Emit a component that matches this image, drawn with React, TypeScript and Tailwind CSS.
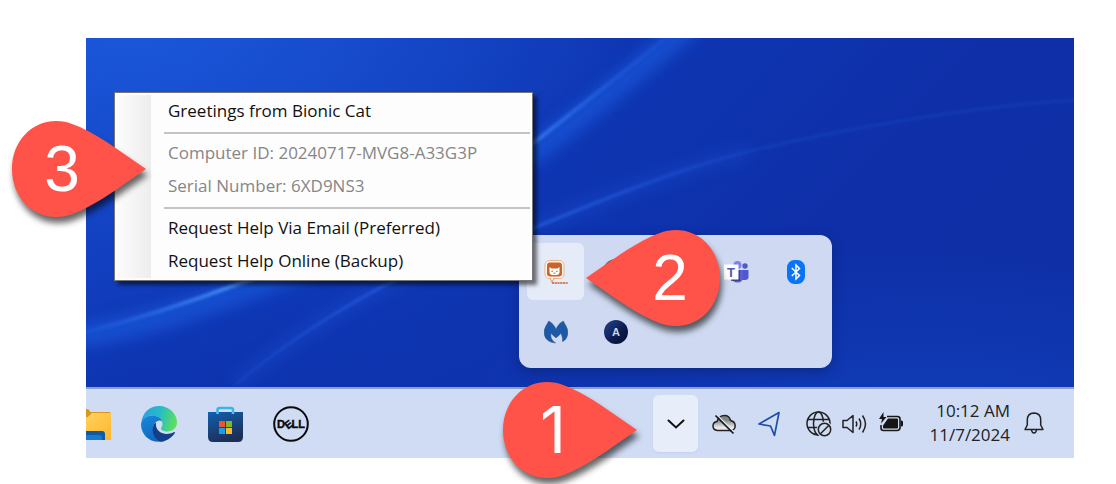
import React from "react";

const Wallpaper: React.FC = () => (
  <svg
    className="absolute inset-0 h-full w-full"
    viewBox="0 0 988 420"
    preserveAspectRatio="none"
    aria-hidden="true"
  >
    <defs>
      <linearGradient id="base" x1="0" y1="0" x2="1" y2="0.4">
        <stop offset="0" stopColor="#1546c8" />
        <stop offset="0.4" stopColor="#0f38b6" />
        <stop offset="0.8" stopColor="#0e2fa8" />
        <stop offset="1" stopColor="#0e2fa6" />
      </linearGradient>
      <radialGradient id="topLeft" cx="0.05" cy="0" r="0.5">
        <stop offset="0" stopColor="#1b58da" stopOpacity="0.9" />
        <stop offset="1" stopColor="#1b58da" stopOpacity="0" />
      </radialGradient>
      <radialGradient id="bottomLeft" cx="0.1" cy="0.95" r="0.4">
        <stop offset="0" stopColor="#0d31ac" />
        <stop offset="1" stopColor="#0d31ac" stopOpacity="0" />
      </radialGradient>
      <radialGradient id="bottomRight" cx="0.85" cy="1" r="0.5">
        <stop offset="0" stopColor="#1142bf" stopOpacity="0.9" />
        <stop offset="1" stopColor="#1142bf" stopOpacity="0" />
      </radialGradient>
      <linearGradient id="beam" gradientUnits="userSpaceOnUse" x1="0" y1="0" x2="600" y2="0">
        <stop offset="0" stopColor="#2f74f2" stopOpacity="0.15" />
        <stop offset="0.25" stopColor="#4c98ff" stopOpacity="0.9" />
        <stop offset="0.75" stopColor="#3c82fa" stopOpacity="0.75" />
        <stop offset="0.9" stopColor="#2c6cf0" stopOpacity="0.3" />
        <stop offset="1" stopColor="#2c6cf0" stopOpacity="0.1" />
      </linearGradient>
      <linearGradient id="thinBeam" gradientUnits="userSpaceOnUse" x1="140" y1="0" x2="988" y2="0">
        <stop offset="0" stopColor="#2b6cf0" stopOpacity="0.1" />
        <stop offset="0.2" stopColor="#2b6cf0" stopOpacity="0.6" />
        <stop offset="0.4" stopColor="#2b6cf0" stopOpacity="0.6" />
        <stop offset="0.6" stopColor="#2b6cf0" stopOpacity="0.2" />
        <stop offset="1" stopColor="#2b6cf0" stopOpacity="0.15" />
      </linearGradient>
      <filter id="soft" x="-20%" y="-20%" width="140%" height="140%">
        <feGaussianBlur stdDeviation="8" />
      </filter>
      <filter id="fine" x="-20%" y="-20%" width="140%" height="140%">
        <feGaussianBlur stdDeviation="1.600" />
      </filter>
    </defs>
    <rect width="988" height="420" fill="url(#base)" />
    <rect width="988" height="420" fill="url(#topLeft)" />
    <rect width="988" height="420" fill="url(#bottomLeft)" />
    <rect width="988" height="420" fill="url(#bottomRight)" />
    <g fill="none">
      <path
        d="M610 -18C562 24 516 62 456 109C356 171 256 218 163 250C106 272 56 288 -10 299"
        stroke="#1f62e6"
        strokeWidth="20"
        opacity="0.6"
        filter="url(#soft)"
      />
      <path
        d="M604 -20C556 20 510 56 450 103C350 165 250 212 157 244C100 266 50 282 -10 296"
        stroke="url(#beam)"
        strokeWidth="4"
        filter="url(#fine)"
      />
      <path
        d="M664 113C590 132 520 160 448 190C400 208 345 225 299 247C260 268 200 304 149 347"
        stroke="#1c56d8"
        strokeWidth="14"
        opacity="0.3"
        filter="url(#soft)"
      />
      <path
        d="M998 62C900 66 760 90 664 113C590 132 520 160 448 190C400 208 345 225 299 247C260 268 200 304 149 347"
        stroke="url(#thinBeam)"
        strokeWidth="3"
        filter="url(#fine)"
      />
    </g>
  </svg>
);

type CalloutProps = {
  label: string;
  flip?: boolean;
  className: string;
};

const Callout: React.FC<CalloutProps> = ({ label, flip, className }) => (
  <div
    className={`absolute z-30 flex h-[96px] w-[134px] items-center text-[64px] text-white drop-shadow-[2px_6px_3px_rgba(0,0,0,0.6)] ${
      flip ? "justify-end" : "justify-start"
    } ${className}`}
  >
    <svg
      className="absolute inset-0 h-full w-full"
      viewBox="0 0 134 96"
      aria-hidden="true"
    >
      <path
        transform={flip ? "translate(134 0) scale(-1 1)" : undefined}
        fill="#ff534a"
        d="M0 48C0 21 19 0 44 0C56 0 66 5 76 10C95 20 115 35 134 48C115 61 95 76 76 86C66 91 56 96 44 96C19 96 0 75 0 48Z"
      />
    </svg>
    <span className="relative w-[100px] text-center leading-none">{label}</span>
  </div>
);

const CatIcon = () => (
  <svg width="26" height="26" viewBox="0 0 26 26">
    <rect x="2" y="1.500" width="19" height="18" rx="4.500" fill="#fff4ea" stroke="#e9b48d" />
    <path d="M7 19L9 23.500L11 19" fill="#fff4ea" stroke="#dc9a6c" />
    <rect x="4" y="3.500" width="15" height="14" rx="3" fill="#c9652b" />
    <path
      d="M6.500 8L8.500 9.500H14.500L16.500 8V13Q16.500 16 13.500 16H9.500Q6.500 16 6.500 13Z"
      fill="#fff"
    />
    <path d="M8.300 12.300H10M13 12.300H14.700M10.500 14.200H12.500" stroke="#c9652b" />
    <path d="M9 24H25" stroke="#c9652b" strokeWidth="1.600" strokeDasharray="2.200 0.500" />
  </svg>
);

const TeamsIcon = () => (
  <svg width="26" height="24" viewBox="0 0 26 24">
    <circle cx="14.500" cy="5" r="4" fill="#7b83eb" />
    <circle cx="22" cy="6" r="2.700" fill="#5059c9" />
    <path d="M18 10H25.500V17Q25.500 20 22 20H18Z" fill="#5059c9" />
    <path d="M9 10H20V17Q20 22.500 14.500 22.500Q9 22.500 9 17Z" fill="#5b5fd0" />
    <path d="M8 10H17V21H8Z" fill="#33377f" opacity="0.8" />
    <rect x="1" y="4.500" width="14.500" height="15" fill="#fff" />
    <text
      x="8"
      y="16.500"
      textAnchor="middle"
      fontFamily="Liberation Sans, sans-serif"
      fontWeight="700"
      fontSize="13"
      fill="#5558af"
    >
      T
    </text>
  </svg>
);

const BluetoothIcon = () => (
  <svg width="18" height="24" viewBox="0 0 18 24">
    <rect width="18" height="24" rx="7.500" fill="#0a74f6" />
    <path
      d="M4.800 8L12.500 15.500L9 19V5L12.500 8.500L4.800 16"
      fill="none"
      stroke="#fff"
      strokeWidth="1.500"
    />
  </svg>
);

const WingsIcon = () => (
  <svg width="24" height="24" viewBox="0 0 24 24">
    <path
      fill="#1c5aa8"
      stroke="#2e4f86"
      strokeWidth="0.600"
      d="M4.600 1.200C8 2.500 10.500 5.500 12 9.500C13.500 5.500 16 2.500 19.400 1.200C20.500 4 23.800 7.500 23.800 12.500C23.800 16.500 21.500 20.500 18.500 21.500C18.800 19 18.500 16 16.800 13.200C15.500 15 14 16.300 12 17.800C10 16.300 8.500 15 7.200 13.200C6 16.500 7.500 20.500 11.500 22.800C5 22.800 0.200 18.500 0.200 12.500C0.200 7.500 3.500 4 4.600 1.200Z"
    />
  </svg>
);

const BadgeIcon = () => (
  <svg width="24" height="24" viewBox="0 0 24 24">
    <defs>
      <linearGradient id="badge" x1="0" y1="0" x2="1" y2="1">
        <stop offset="0" stopColor="#24468c" />
        <stop offset="0.6" stopColor="#0a1a4c" />
        <stop offset="1" stopColor="#050e34" />
      </linearGradient>
    </defs>
    <circle cx="12" cy="12" r="12" fill="url(#badge)" />
    <text
      x="12"
      y="16"
      textAnchor="middle"
      fontFamily="Liberation Sans, sans-serif"
      fontSize="11"
      fontWeight="700"
      fill="#c9d4ea"
    >
      A
    </text>
  </svg>
);

const TrayFlyout: React.FC = () => {
  const apps = [
    { name: "Bionic Cat", icon: <CatIcon />, active: true },
    {
      name: "Sync",
      icon: (
        <svg width="26" height="26" viewBox="0 0 26 26">
          <circle cx="13" cy="13" r="13" fill="#4b5b68" />
        </svg>
      ),
    },
    { name: "Background app", icon: null },
    { name: "Teams", icon: <TeamsIcon /> },
    { name: "Bluetooth", icon: <BluetoothIcon /> },
    { name: "Malwarebytes", icon: <WingsIcon /> },
    { name: "Agent", icon: <BadgeIcon /> },
  ];

  return (
    <div className="absolute right-[242px] bottom-[90px] z-10 grid grid-cols-5 gap-[3px] rounded-xl bg-[#cfdaf2] p-2 shadow-[0_4px_12px_rgba(10,30,100,0.5)]">
      {apps.map((app) => (
        <button
          key={app.name}
          aria-label={app.name}
          className={`flex size-[57px] items-center justify-center rounded-md ${
            app.active ? "bg-[#e6ebf8]" : ""
          }`}
        >
          {app.icon}
        </button>
      ))}
    </div>
  );
};

const menuGroups = [
  { disabled: false, items: ["Greetings from Bionic Cat"] },
  {
    disabled: true,
    items: ["Computer ID: 20240717-MVG8-A33G3P", "Serial Number: 6XD9NS3"],
  },
  {
    disabled: false,
    items: ["Request Help Via Email (Preferred)", "Request Help Online (Backup)"],
  },
];

const ContextMenu: React.FC = () => (
  <div className="absolute top-[54px] left-[28px] z-20 flex w-[419px] border border-[#777] bg-[#fdfdfd] p-[2px] shadow-[4px_4px_4px_rgba(0,0,0,0.55)]">
    <div className="w-[34px] bg-linear-to-r from-[#fcfcfc] to-[#ededed]" />
    <div className="flex-1 pl-[13px] text-[17px]">
      {menuGroups.map((group, index) => (
        <div key={index}>
          {index > 0 && (
            <div className="flex h-[9px] items-center">
              <hr className="w-full border-t-2 border-[#c4c4c4]" />
            </div>
          )}
          {group.items.map((item) => (
            <button
              key={item}
              disabled={group.disabled}
              className="block h-[33px] w-full pb-0.5 pl-1 text-left whitespace-nowrap text-[#111] disabled:text-[#868686]"
            >
              {item}
            </button>
          ))}
        </div>
      ))}
    </div>
  </div>
);

const FolderIcon = () => (
  <svg width="36" height="36" viewBox="0 0 36 36" className="shrink-0">
    <defs>
      <linearGradient id="folder" x1="0" y1="0" x2="1" y2="1">
        <stop offset="0" stopColor="#ffd766" />
        <stop offset="1" stopColor="#fdb52c" />
      </linearGradient>
    </defs>
    <path d="M0 5Q0 3 2 3H12Q14 3 15.500 6H34Q36 6 36 8V20H0Z" fill="#d9961a" />
    <path d="M0 13Q12 13 15 9L17 7H36V34H2Q0 34 0 32Z" fill="url(#folder)" />
    <path d="M0 25H27Q30 25 30 28V34H0Z" fill="#0f5aa8" />
    <path d="M0 29H24Q27 29 27 31V34H0Z" fill="#1a78cf" />
  </svg>
);

const EdgeIcon = () => (
  <svg width="36" height="36" viewBox="0 0 36 36">
    <defs>
      <linearGradient id="edgeTop" x1="0" y1="0.3" x2="1" y2="0.5">
        <stop offset="0" stopColor="#2b9fe0" />
        <stop offset="0.5" stopColor="#27bcc4" />
        <stop offset="1" stopColor="#5fe05a" />
      </linearGradient>
      <linearGradient id="edgeLeft" x1="0" y1="0" x2="0.4" y2="1">
        <stop offset="0" stopColor="#1689dc" />
        <stop offset="1" stopColor="#1268bd" />
      </linearGradient>
    </defs>
    <path
      fill="url(#edgeTop)"
      d="M0.300 17C1 7 8.500 0 18 0C28.500 0 36 8 36 16.500C36 22 31.500 25.500 26.500 25.500C22.500 25.500 20 24 20 22.500C20 21.500 21.500 20.500 21.500 17.800C21.500 13.500 17 9.500 11 9.500C6 9.500 2 12.500 0.300 17Z"
    />
    <path
      fill="url(#edgeLeft)"
      d="M0 18C1 13 5.500 9.500 11 9.500C16 9.500 20 12 21.200 15.500C19 13.800 16 14.500 14 17C11.500 20 11.500 26 16 31C18 33 20 35 21 35.600C9 37.500 0 29 0 18Z"
    />
    <path
      fill="#123f86"
      d="M13.200 18C10.500 22.500 11.500 29 15.500 33C17.500 35 19.500 35.800 21 35.700C27 34.500 31.500 30.800 33.800 27C34.200 26 33.500 25.700 32.700 26.200C28 28.700 22 28.500 18 25.200C15.500 23 14.500 20.500 15 16.500Z"
    />
  </svg>
);

const StoreIcon = () => (
  <svg width="36" height="36" viewBox="0 0 36 36">
    <defs>
      <linearGradient id="store" x1="0" y1="0" x2="0.4" y2="1">
        <stop offset="0" stopColor="#1260b2" />
        <stop offset="1" stopColor="#1d2f57" />
      </linearGradient>
    </defs>
    <path d="M10.500 10V4Q10.500 2 12.500 2H24Q26 2 26 4V10" fill="none" stroke="#35b5ee" strokeWidth="2.500" />
    <path d="M1 6H36V31Q36 36 31 36H6Q1 36 1 31Z" fill="url(#store)" />
    <path d="M10.500 6V8M26 6V8" stroke="#4fc8f8" strokeWidth="2.500" />
    <path d="M12 15H18V21H12Z" fill="#f1512b" />
    <path d="M19 15H25V21H19Z" fill="#7eb72a" />
    <path d="M12 22H18V28H12Z" fill="#12a1ee" />
    <path d="M19 22H25V28H19Z" fill="#fcb72c" />
  </svg>
);

const DellIcon = () => (
  <svg width="36" height="36" viewBox="0 0 36 36">
    <circle cx="18" cy="18" r="16.800" fill="none" stroke="#0a0a0a" strokeWidth="2" />
    <g
      fontFamily="Liberation Sans, sans-serif"
      fontWeight="700"
      fontSize="11"
      fill="#0a0a0a"
      stroke="#0a0a0a"
      strokeWidth="0.400"
    >
      <text x="4" y="22">
        D
      </text>
      <text x="11.500" y="22.500" transform="rotate(-38 15 18)">
        E
      </text>
      <text x="18.500" y="22">
        LL
      </text>
    </g>
  </svg>
);

const CloudOffIcon = () => (
  <svg width="24" height="24" viewBox="0 0 24 24">
    <defs>
      <linearGradient id="cloud" x1="0" y1="0" x2="0" y2="1">
        <stop offset="0.3" stopColor="#858585" />
        <stop offset="0.8" stopColor="#e8e8e8" />
      </linearGradient>
    </defs>
    <path
      d="M5.500 18.500Q1 18 1 14Q1 10 5 9.500Q6.500 3.500 12.500 3.500Q17.500 3.500 18.500 8.500Q23.200 9.500 23.200 14Q23 18 19 18.500Z"
      fill="url(#cloud)"
      stroke="#222"
      strokeWidth="1.500"
    />
    <path d="M5 3L22 20" stroke="#e4ebf8" strokeWidth="1.500" />
    <path d="M3.500 3.500L21.500 21.500" stroke="#151515" strokeWidth="1.700" />
  </svg>
);

const LocationIcon = () => (
  <svg width="24" height="26" viewBox="0 0 24 26">
    <path
      d="M21 1.500L1 13L12.500 15L16.500 24.300Z"
      fill="none"
      stroke="#1c4fa8"
      strokeWidth="1.700"
      strokeLinejoin="round"
    />
  </svg>
);

const GlobeIcon = () => (
  <svg width="26" height="26" viewBox="0 0 26 26" fill="none" stroke="#222" strokeWidth="1.500">
    <circle cx="12.500" cy="12.500" r="11.500" />
    <ellipse cx="12.500" cy="12.500" rx="5" ry="11.500" />
    <path d="M2 8.500H23M2 16.500H12" />
    <circle cx="18.500" cy="18.500" r="8" fill="#d0dcf4" stroke="none" />
    <circle cx="18.500" cy="18.500" r="6.200" />
    <path d="M14.500 22.700L22.700 14.500" />
  </svg>
);

const SpeakerIcon = () => (
  <svg width="26" height="24" viewBox="0 0 26 24" fill="none" stroke="#222" strokeWidth="1.500">
    <path d="M1 8.500H5L11 3.500V20.500L5 15.500H1Z" strokeLinejoin="round" />
    <path d="M14 9.500Q15.500 12 14 14.500M17 6.500Q20.500 12 17 17.500M20.500 3.500Q26.500 12 20.500 20.500" />
  </svg>
);

const BatteryIcon = () => (
  <svg width="26" height="24" viewBox="0 0 26 24">
    <path
      d="M9 4.500H19.500Q22 4.500 22 7V15.500Q22 18.500 19 18.500H5.500Q3 18.500 3 16V13"
      fill="none"
      stroke="#181818"
      strokeWidth="1.600"
    />
    <path d="M10 6.500H19Q20 6.500 20 7.500V15.500Q20 16.500 19 16.500H6Q5 16.500 5 15.500V13.500Z" fill="#151515" />
    <path d="M22.800 8.500H23.500Q25 8.500 25 10V13Q25 14.500 23.500 14.500H22.800Z" fill="#151515" />
    <path d="M5.500 0L1 7H4L3 11.500L8.500 5H5.500Z" fill="#151515" />
  </svg>
);

const BellIcon = () => (
  <svg width="20" height="24" viewBox="0 0 20 24" fill="none" stroke="#222" strokeWidth="1.500">
    <path
      d="M10 1Q3.300 1.300 3.300 8V13L1 17.500H19L16.700 13V8Q16.700 1.300 10 1Z"
      strokeLinejoin="round"
    />
    <path d="M7.500 18Q8 21 10 21Q12 21 12.500 18" />
  </svg>
);

const Taskbar: React.FC = () => (
  <footer className="relative flex h-[71px] items-center border-t-2 border-[#8f9ecb] bg-[#d0dcf4] pr-[30px]">
    <nav className="flex items-center gap-[30px]">
      <button
        aria-label="File Explorer"
        className="flex w-[25px] justify-end overflow-hidden"
      >
        <FolderIcon />
      </button>
      <button aria-label="Edge">
        <EdgeIcon />
      </button>
      <button aria-label="Store">
        <StoreIcon />
      </button>
      <button aria-label="Dell">
        <DellIcon />
      </button>
    </nav>

    <div className="ml-auto flex items-center">
      <button
        aria-label="Show hidden icons"
        className="flex h-[57px] w-[45px] items-center justify-center rounded-md bg-[#e7edf9] shadow-xs"
      >
        <svg width="18" height="10" viewBox="0 0 18 10">
          <path
            d="M1.500 1.500L9 8.500L16.500 1.500"
            fill="none"
            stroke="#111"
            strokeWidth="2"
            strokeLinecap="round"
          />
        </svg>
      </button>
      <button aria-label="OneDrive" className="ml-[14px]">
        <CloudOffIcon />
      </button>
      <button aria-label="Location" className="ml-[22px]">
        <LocationIcon />
      </button>
      <button aria-label="Network, volume and battery" className="ml-6 flex items-center gap-[10px]">
        <GlobeIcon />
        <SpeakerIcon />
        <BatteryIcon />
      </button>
      <time className="ml-[22px] w-[84px] pb-0.5 text-right text-[17px] leading-6 whitespace-nowrap text-[#222]">
        10:12 AM
        <br />
        11/7/2024
      </time>
      <button aria-label="Notifications" className="ml-[14px]">
        <BellIcon />
      </button>
    </div>
  </footer>
);

const App: React.FC = () => {
  return (
    <main className="flex min-h-screen overflow-hidden bg-white pt-[38px] pr-[42px] pb-[26px] pl-[86px] font-['Open_Sans','Noto_Sans',sans-serif]">
      <section className="relative flex flex-1 flex-col">
        <Wallpaper />
        <div className="flex-1" />
        <Taskbar />

        <TrayFlyout />
        <ContextMenu />

        <Callout
          label="3"
          className="top-[83px] -left-[74px] font-['Liberation_Sans',sans-serif]"
        />
        <Callout
          label="2"
          flip
          className="right-[354px] bottom-[132px] font-['Liberation_Sans',sans-serif]"
        />
        <Callout
          label="1"
          className="right-[437px] -bottom-[20px] font-['Inter',sans-serif]"
        />
      </section>
    </main>
  );
};

export default App;
